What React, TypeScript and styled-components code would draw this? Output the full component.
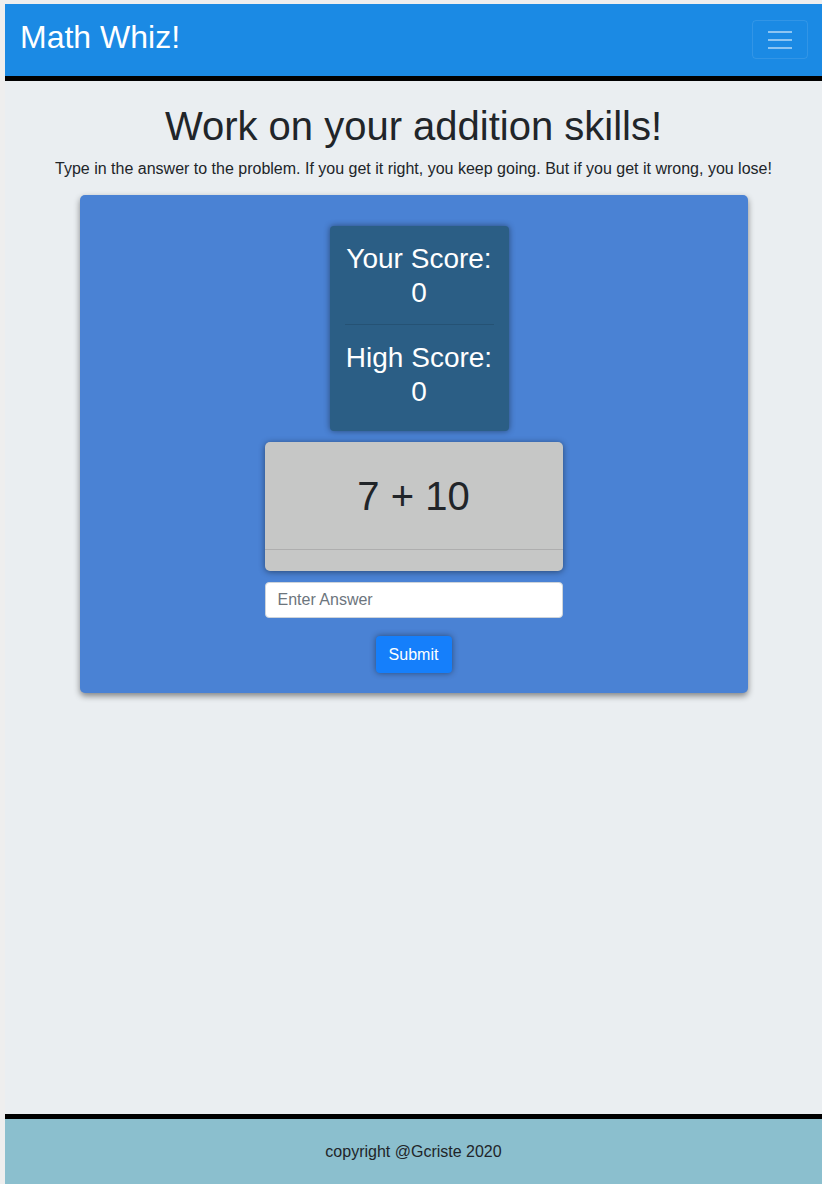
import React from "react";
import styled, { createGlobalStyle } from "styled-components";

const GlobalStyle = createGlobalStyle`
  html, body {
    margin: 0;
    padding: 0;
    background: #eeeeee;
  }
  body {
    font-family: "Liberation Sans", Arial, Helvetica, sans-serif;
    color: #212529;
  }
  * {
    box-sizing: border-box;
  }
`;

const Frame = styled.div`
  padding: 4px 0 0 5px;
  background: #eeeeee;
`;

const Page = styled.div`
  min-height: calc(100vh - 4px);
  display: flex;
  flex-direction: column;
`;

const NavBar = styled.nav`
  height: 77px;
  background-color: #1b8ae4;
  border-bottom: 5px solid #000;
  display: flex;
  align-items: flex-start;
  justify-content: space-between;
  padding: 0 14px 0 15px;
`;

const Brand = styled.a`
  margin-top: 14px;
  font-size: 32px;
  line-height: 1.2;
  color: #fff;
  text-decoration: none;
`;

const Toggler = styled.button`
  margin-top: 16px;
  width: 56px;
  height: 39px;
  border: 1px solid rgba(255, 255, 255, 0.1);
  border-radius: 4px;
  background: transparent;
  display: flex;
  flex-direction: column;
  align-items: center;
  justify-content: center;
  gap: 6px;
  padding: 0;
`;

const TogglerLine = styled.span`
  display: block;
  width: 24px;
  height: 2px;
  background: rgba(255, 255, 255, 0.5);
`;

const Main = styled.main`
  flex: 1;
  background-color: #eaeef1;
  text-align: center;
  padding-bottom: 40px;
`;

const Title = styled.h1`
  margin: 21px 0 7px;
  font-size: 40px;
  font-weight: 400;
  line-height: 1.2;
`;

const Lead = styled.p`
  margin: 0;
  font-size: 16px;
  line-height: 1.5;
`;

const GameCard = styled.section`
  width: 668px;
  margin: 14px auto 0;
  padding: 31px 0 20px;
  background-color: #4a82d4;
  border-radius: 5px;
  box-shadow: 0 3px 6px rgba(0, 0, 0, 0.45);
  display: flex;
  flex-direction: column;
  align-items: center;
`;

const ScoreBox = styled.div`
  width: 179px;
  margin-left: 11px;
  padding: 16px 15px 15px;
  background-color: #2b5e85;
  border-radius: 4px;
  box-shadow: 0 0 6px rgba(0, 0, 0, 0.45);
  color: #fff;
`;

const ScoreLine = styled.div<{ $last?: boolean }>`
  font-size: 28px;
  line-height: 1.2;
  margin-bottom: ${(p) => (p.$last ? "8px" : "0")};
`;

const ScoreDivider = styled.hr`
  margin: 15px 0 16px;
  border: 0;
  border-top: 1px solid rgba(0, 0, 0, 0.12);
`;

const ProblemCard = styled.div`
  width: 298px;
  margin-top: 11px;
  background-color: #c6c7c6;
  border-radius: 5px;
  box-shadow: 0 1px 6px rgba(0, 0, 0, 0.45);
  overflow: hidden;
`;

const ProblemBody = styled.div`
  padding: 30px 0 29px;
  font-size: 40px;
  line-height: 1.2;
  border-bottom: 1px solid rgba(0, 0, 0, 0.12);
`;

const ProblemFooter = styled.div`
  height: 21px;
`;

const AnswerInput = styled.input`
  width: 298px;
  height: 36px;
  margin-top: 11px;
  padding: 0 12px;
  border: 1px solid #ced4da;
  border-radius: 4px;
  font-family: inherit;
  font-size: 16px;
  color: #495057;
  background: #fff;
  &::placeholder {
    color: #6c757d;
  }
`;

const SubmitButton = styled.button`
  margin-top: 18px;
  width: 76px;
  height: 37px;
  border: 0;
  border-radius: 4px;
  background-color: #157ffb;
  color: #fff;
  font-family: inherit;
  font-size: 16px;
  box-shadow: 0 0 6px rgba(0, 0, 0, 0.45);
`;

const Footer = styled.footer`
  height: 70px;
  border-top: 5px solid #000;
  background-color: #8bbfce;
  display: flex;
  align-items: center;
  justify-content: center;
  font-size: 16px;
  color: #212529;
`;

export default function App() {
  return (
    <Frame>
      <GlobalStyle />
      <Page>
        <NavBar>
          <Brand href="#">Math Whiz!</Brand>
          <Toggler aria-label="Toggle navigation">
            <TogglerLine />
            <TogglerLine />
            <TogglerLine />
          </Toggler>
        </NavBar>
        <Main>
          <Title>Work on your addition skills!</Title>
          <Lead>
            Type in the answer to the problem. If you get it right, you keep going. But if you get it wrong, you lose!
          </Lead>
          <GameCard>
            <ScoreBox>
              <ScoreLine>Your Score:</ScoreLine>
              <ScoreLine>0</ScoreLine>
              <ScoreDivider />
              <ScoreLine>High Score:</ScoreLine>
              <ScoreLine $last>0</ScoreLine>
            </ScoreBox>
            <ProblemCard>
              <ProblemBody>7 + 10</ProblemBody>
              <ProblemFooter />
            </ProblemCard>
            <AnswerInput placeholder="Enter Answer" />
            <SubmitButton>Submit</SubmitButton>
          </GameCard>
        </Main>
        <Footer>copyright @Gcriste 2020</Footer>
      </Page>
    </Frame>
  );
}
